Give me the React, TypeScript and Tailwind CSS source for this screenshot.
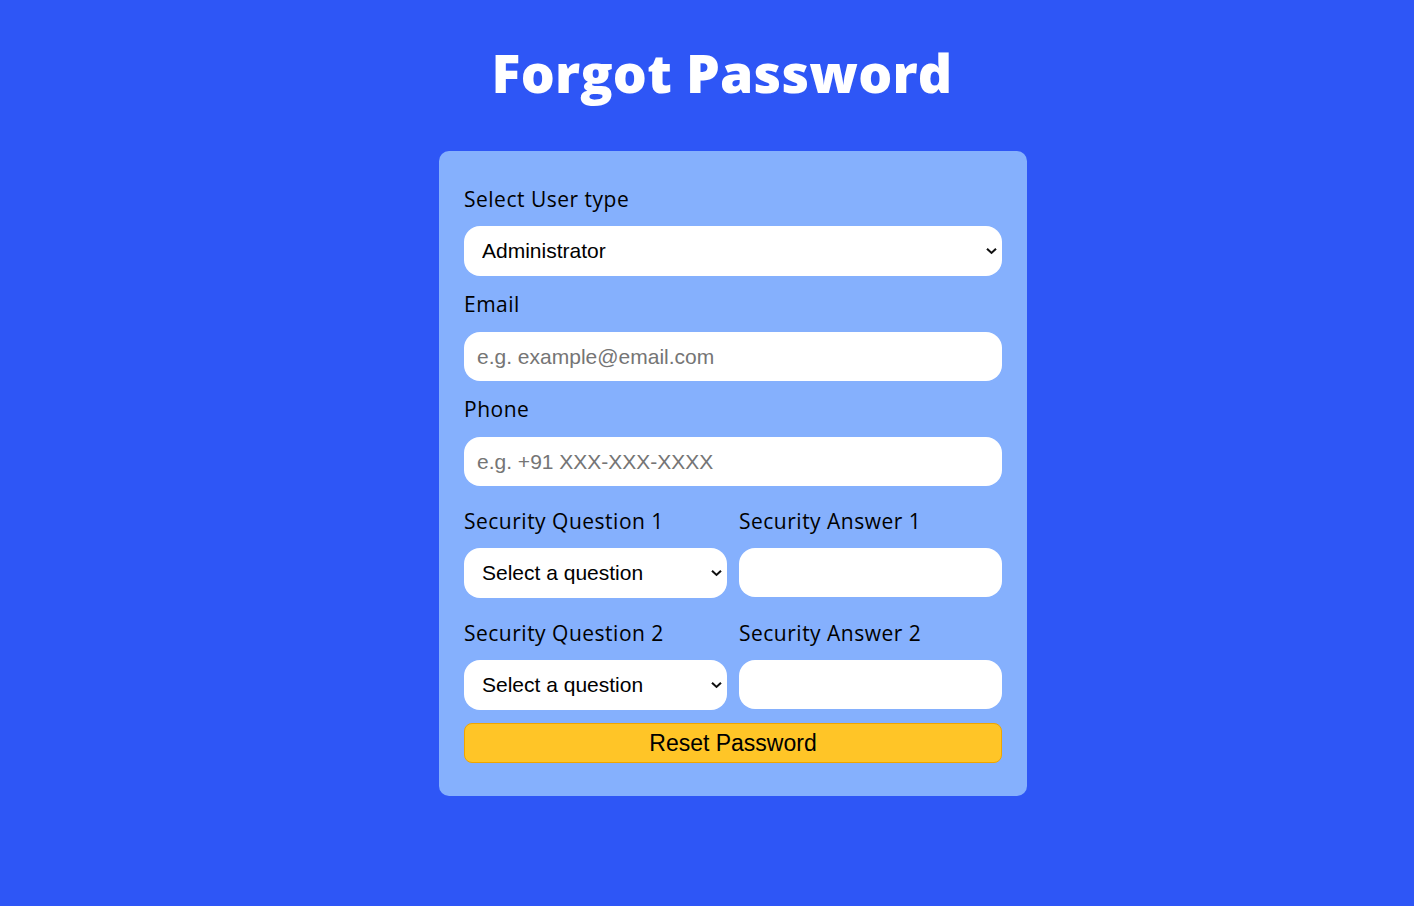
import React from "react";

function Chevron() {
  return (
    <svg
      className="pointer-events-none absolute right-[5px] top-1/2 -translate-y-1/2"
      width="11"
      height="7"
      viewBox="0 0 11 7"
      fill="none"
    >
      <path d="M1 1.2 L5.5 5.4 L10 1.2" stroke="#111" strokeWidth="2.1" />
    </svg>
  );
}

function Label({ children, className = "" }: { children: React.ReactNode; className?: string }) {
  return (
    <div
      className={`h-[28px] text-[21px] leading-[28px] tracking-[0.5px] text-black font-['Open_Sans',sans-serif] ${className}`}
    >
      {children}
    </div>
  );
}

function Select({ value }: { value: string }) {
  return (
    <div className="relative mt-[13px] w-full">
      <select
        defaultValue={value}
        className="h-[50px] w-full appearance-none rounded-[16px] bg-white pl-[18px] pr-[30px] text-[21px] text-black outline-none font-['Liberation_Sans',Arial,sans-serif]"
      >
        <option>{value}</option>
      </select>
      <Chevron />
    </div>
  );
}

function Input({ placeholder = "", className = "" }: { placeholder?: string; className?: string }) {
  return (
    <input
      placeholder={placeholder}
      className={`h-[49px] w-full rounded-[16px] bg-white pl-[13px] text-[21px] text-black outline-none placeholder:text-[#757575] font-['Liberation_Sans',Arial,sans-serif] ${className}`}
    />
  );
}

export default function App() {
  return (
    <div className="min-h-[906px] w-full bg-[#2e56f6] flex flex-col items-center">
      <h1 className="mt-[38px] ml-[30px] h-[70px] text-[53.5px] leading-[70px] font-extrabold text-white tracking-[0.2px] font-['Open_Sans',sans-serif]">
        Forgot Password
      </h1>
      <div className="mt-[43px] ml-[52px] w-[588px] rounded-[10px] bg-[#85b0fd] px-[25px] pt-[34px] pb-[33px]">
        <Label>Select User type</Label>
        <Select value="Administrator" />
        <Label className="mt-[14px]">Email</Label>
        <div className="mt-[14px]">
          <Input placeholder="e.g. example@email.com" />
        </div>
        <Label className="mt-[14px]">Phone</Label>
        <div className="mt-[14px]">
          <Input placeholder="e.g. +91 XXX-XXX-XXXX" />
        </div>

        <div className="mt-[21px] grid grid-cols-2 gap-x-[12px]">
          <div>
            <Label>Security Question 1</Label>
            <Select value="Select a question" />
          </div>
          <div>
            <Label>Security Answer 1</Label>
            <div className="mt-[13px]">
              <Input />
            </div>
          </div>
        </div>

        <div className="mt-[21px] grid grid-cols-2 gap-x-[12px]">
          <div>
            <Label>Security Question 2</Label>
            <Select value="Select a question" />
          </div>
          <div>
            <Label>Security Answer 2</Label>
            <div className="mt-[13px]">
              <Input />
            </div>
          </div>
        </div>

        <button className="mt-[13px] h-[40px] w-full rounded-[8px] border border-[#f0a500] bg-[#ffc527] text-[23px] text-black font-['Liberation_Sans',Arial,sans-serif]">
          Reset Password
        </button>
      </div>
    </div>
  );
}
